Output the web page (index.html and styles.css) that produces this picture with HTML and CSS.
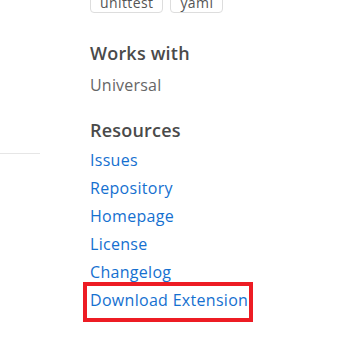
FILE: index.html
```html
<!DOCTYPE html>
<html lang="en">
<head>
  <meta charset="UTF-8">
  <title>Extension details</title>
  <meta name="viewport" content="width=device-width, initial-scale=1.0">
  <link rel="stylesheet" href="styles.css">
</head>
<body>

  <div class="page">
    <!-- Main column (end of overview) -->
    <div class="main">
      <div class="main-end"></div>
    </div>

    <!-- Sidebar -->
    <aside class="sidebar">
      <div class="tags">
        <span class="tag">unittest</span>
        <span class="tag">yaml</span>
      </div>

      <section class="block">
        <h3>Works with</h3>
        <p>Universal</p>
      </section>

      <section class="block">
        <h3>Resources</h3>
        <ul class="links">
          <li><a href="#">Issues</a></li>
          <li><a href="#">Repository</a></li>
          <li><a href="#">Homepage</a></li>
          <li><a href="#">License</a></li>
          <li><a href="#">Changelog</a></li>
          <li><a href="#" class="highlight">Download Extension</a></li>
        </ul>
      </section>

      <section class="block">
        <h3>Project Details</h3>
      </section>
    </aside>
  </div>

</body>
</html>
```

FILE: styles.css
```css
* {
  margin: 0;
  padding: 0;
  box-sizing: border-box;
}

body {
  font-family: 'Segoe UI', 'Open Sans', sans-serif;
  background: #fff;
  color: #666;
  overflow: hidden;
}

.page {
  display: grid;
  grid-template-columns: 40px 1fr;
  column-gap: 50px;
}

.main-end {
  margin-top: 153px;
  border-top: 1px solid #e6e6e6;
}

.tags {
  display: flex;
  gap: 7px;
  margin-top: -13px;
  margin-bottom: 28px;
}

.tag {
  display: inline-block;
  height: 26px;
  padding: 6px 9px 0;
  border: 1px solid #ddd;
  border-radius: 4px;
  font-size: 14px;
  line-height: 18px;
  letter-spacing: 0.4px;
  color: #555;
}

.block {
  margin-bottom: 19px;
}

h3 {
  font-size: 18px;
  font-weight: 600;
  line-height: 24px;
  letter-spacing: 0.2px;
  color: #4a4a4a;
  margin-bottom: 6px;
}

.block p {
  font-size: 16px;
  line-height: 28px;
  letter-spacing: 0.2px;
}

.links {
  list-style: none;
  margin-top: -2px;
}

.links li {
  font-size: 16px;
  line-height: 28px;
  letter-spacing: 0.3px;
}

.links a {
  color: #1570d0;
  text-decoration: none;
}

.links a:hover {
  text-decoration: underline;
}

.highlight {
  position: relative;
}

.highlight::after {
  content: '';
  position: absolute;
  top: -7px;
  left: -7px;
  right: -5px;
  bottom: -11px;
  border: 4px solid #ed1c24;
  pointer-events: none;
}
```
